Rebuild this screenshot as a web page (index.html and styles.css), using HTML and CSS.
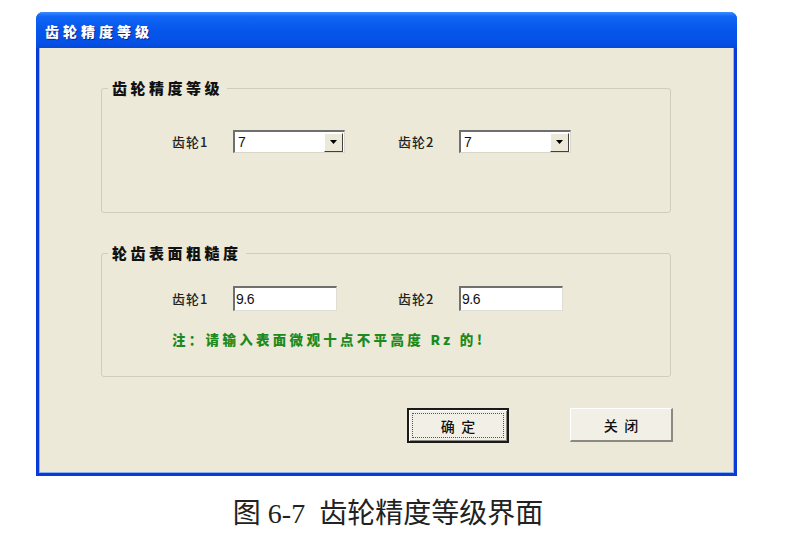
FILE: index.html
```html
<!DOCTYPE html>
<html lang="zh">
<head>
<meta charset="utf-8">
<title>齿轮精度等级</title>
<link rel="stylesheet" href="styles.css">
</head>
<body>
<div class="window">
  <div class="titlebar"><span class="title">齿轮精度等级</span></div>
  <div class="client">
    <fieldset class="group g1">
      <legend>齿轮精度等级</legend>
      <div class="row r1">
        <span class="lbl">齿轮1</span>
        <div class="cell"><div class="combo"><span class="val">7</span><span class="drop"><svg width="7" height="4" viewBox="0 0 7 4"><path d="M0 0H7L3.5 4Z" fill="#000"/></svg></span></div></div>
        <span class="lbl">齿轮2</span>
        <div class="cell"><div class="combo"><span class="val">7</span><span class="drop"><svg width="7" height="4" viewBox="0 0 7 4"><path d="M0 0H7L3.5 4Z" fill="#000"/></svg></span></div></div>
      </div>
    </fieldset>
    <fieldset class="group g2">
      <legend>轮齿表面粗糙度</legend>
      <div class="row r2">
        <span class="lbl">齿轮1</span>
        <div class="cell"><div class="edit"><span class="val">9.6</span></div></div>
        <span class="lbl">齿轮2</span>
        <div class="cell"><div class="edit"><span class="val">9.6</span></div></div>
      </div>
      <div class="note">注：请输入表面微观十点不平高度 Rz 的!</div>
    </fieldset>
    <div class="buttons">
      <div class="btn default"><span class="focus">确&nbsp;&nbsp;定</span></div>
      <div class="btn">关&nbsp;&nbsp;闭</div>
    </div>
  </div>
</div>
<div class="caption">图 6-7&nbsp;&nbsp;齿轮精度等级界面</div>
</body>
</html>
```
FILE: styles.css
```css
html, body { margin: 0; padding: 0; background: #fff; }
body { width: 798px; height: 540px; overflow: hidden; font-family: "Liberation Sans", "Noto Sans CJK SC", sans-serif; }

.window {
  margin: 12px 0 0 36px;
  width: 701px;
  height: 464px;
  box-sizing: border-box;
  border: 3px solid #0B3BD6;
  border-top: 0;
  border-radius: 7px 7px 0 0;
  background: #ECE9D8;
  display: flex;
  flex-direction: column;
}
.titlebar {
  margin: 0 -3px;
  height: 36px;
  border-radius: 7px 7px 0 0;
  background: linear-gradient(#3A8CFF 0%, #1166F5 12%, #0656EC 50%, #0551E6 85%, #0649D8 100%);
  display: flex;
  align-items: center;
  padding-left: 9px;
  flex: none;
}
.title {
  font-family: "Noto Sans CJK SC", sans-serif;
  font-weight: 900;
  font-size: 14px;
  letter-spacing: 4px;
  color: #fff;
  text-shadow: 1px 1px 0 #0A2A8A;
  margin-top: 2px;
}
.client {
  flex: 1;
  padding: 31px 0 0 62px;
  box-shadow: inset 1px 0 0 #8FB2F5, inset -1px 0 0 #8FB2F5, inset 0 -1px 0 #8FB2F5;
}
.group {
  width: 570px;
  box-sizing: border-box;
  margin: 0;
  padding: 0;
  border: 1px solid #CFCDBE;
  border-radius: 3px;
}
.group legend {
  margin-left: 6px;
  padding: 0 4px;
  font-family: "Noto Sans CJK SC", sans-serif;
  font-weight: 900;
  font-size: 15px;
  line-height: 18px;
  letter-spacing: 3.5px;
  color: #111;
}
.g1 { height: 134px; }
.g2 { height: 133px; margin-top: 31px; }
.row { display: flex; align-items: center; padding-left: 70px; }
.r1 { margin-top: 33px; }
.r2 { margin-top: 24px; }
.lbl {
  font-family: "Noto Sans CJK SC", sans-serif;
  font-size: 13px;
  font-weight: 500;
  letter-spacing: 1px;
  color: #222;
  width: 61px;
}
.cell { width: 165px; }
.combo {
  width: 112px;
  height: 23px;
  box-sizing: border-box;
  background: #fff;
  border-top: 2px solid #6F6F6F;
  border-left: 2px solid #6F6F6F;
  border-right: 1px solid #D8D6CA;
  border-bottom: 1px solid #D8D6CA;
  display: flex;
  align-items: center;
  justify-content: space-between;
}
.val { font-size: 14px; color: #111; padding-left: 3px; }
.drop {
  width: 19px;
  height: 19px;
  margin-right: 1px;
  box-sizing: border-box;
  background: #ECE9D8;
  border-top: 1px solid #fff;
  border-left: 1px solid #fff;
  border-right: 1px solid #404040;
  border-bottom: 1px solid #404040;
  display: flex;
  align-items: center;
  justify-content: center;
}
.edit {
  width: 104px;
  height: 25px;
  box-sizing: border-box;
  background: #fff;
  border-top: 2px solid #707070;
  border-left: 2px solid #707070;
  border-right: 1px solid #E0DED2;
  border-bottom: 1px solid #E0DED2;
  display: flex;
  align-items: center;
}
.edit .val { padding-left: 1px; letter-spacing: -0.5px; }
.note {
  margin: 19px 0 0 70px;
  font-family: "Noto Sans CJK SC", sans-serif;
  font-weight: 900;
  font-size: 13.5px;
  line-height: 18px;
  letter-spacing: 3.3px;
  color: #1D8A1D;
}
.buttons { display: flex; margin: 31px 0 0 306px; gap: 61px; }
.btn {
  width: 103px;
  height: 34px;
  box-sizing: border-box;
  background: #F2F0E6;
  border-top: 1px solid #fff;
  border-left: 1px solid #fff;
  border-right: 2px solid #8A8A80;
  border-bottom: 2px solid #8A8A80;
  display: flex;
  align-items: center;
  justify-content: center;
  font-family: "Noto Sans CJK SC", sans-serif;
  font-size: 14px;
  font-weight: 500;
  color: #111;
}
.btn.default {
  width: 102px;
  height: 35px;
  border: 2px solid #1A1A1A;
  box-shadow: inset 1px 1px 0 #fff, inset -1px -1px 0 #8A8A80;
  padding: 3px;
}
.focus {
  flex: 1;
  align-self: stretch;
  border: 1px dotted #555;
  display: flex;
  align-items: center;
  justify-content: center;
}
.caption {
  margin-top: 22px;
  text-align: center;
  padding-right: 22px;
  font-family: "Liberation Serif", "Noto Sans CJK SC", serif;
  font-size: 28px;
  line-height: 32px;
  color: #222;
}
```
